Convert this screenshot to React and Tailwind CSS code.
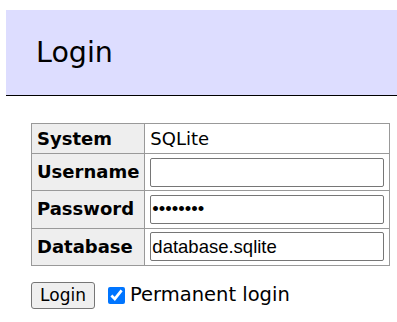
import React, { useState } from 'react';

const fields = [
  { label: 'Username', type: 'text', value: '' },
  { label: 'Password', type: 'password', value: 'password' },
  { label: 'Database', type: 'text', value: 'database.sqlite' },
];

const App = () => {
  const [values, setValues] = useState(fields.map((f) => f.value));
  const [permanent, setPermanent] = useState(true);

  const update = (index, value) => {
    const next = [...values];
    next[index] = value;
    setValues(next);
  };

  return (
    <div className="min-h-[322px] bg-white pt-[10px] pl-[6px] font-['DejaVu_Sans',sans-serif] text-black">
      <h2 className="h-[86px] bg-[#ddf] border-b border-black pl-[30px] pt-[26px] text-[28.5px] leading-[34px] font-normal">
        Login
      </h2>

      <form className="ml-[25px] mt-[27px]" onSubmit={(e) => e.preventDefault()}>
        <table className="border-collapse text-[18px] leading-[22px]">
          <tbody>
            <tr>
              <th className="border border-[#999] bg-[#eee] px-[5px] py-[3.6px] text-left font-bold">System</th>
              <td className="border border-[#999] px-[5px] py-[3.6px]">SQLite</td>
            </tr>
            {fields.map((field, index) => (
              <tr key={field.label}>
                <th className="border border-[#999] bg-[#eee] px-[5px] py-[3.6px] text-left font-bold">{field.label}</th>
                <td className="border border-[#999] px-[5px] py-[3.6px]">
                  <input
                    type={field.type}
                    value={values[index]}
                    onChange={(e) => update(index, e.target.value)}
                    className="block w-[234px] h-[29px] border border-[#767676] rounded-[2px] px-[1px] font-['Liberation_Sans',Arial,sans-serif] text-[18.5px]"
                  />
                </td>
              </tr>
            ))}
          </tbody>
        </table>

        <div className="mt-[16px] flex items-center">
          <button
            type="submit"
            className="h-[27px] w-[64px] border border-[#767676] rounded-[3px] bg-[#efefef] text-[17px] leading-[20px]"
          >
            Login
          </button>
          <label className="ml-[13px] flex items-center text-[19.5px] leading-[24px]">
            <input
              type="checkbox"
              checked={permanent}
              onChange={(e) => setPermanent(e.target.checked)}
              className="w-[17px] h-[17px] m-0 mr-[5px] accent-[#0075ff]"
            />
            Permanent login
          </label>
        </div>
      </form>
    </div>
  );
};

export default App;
